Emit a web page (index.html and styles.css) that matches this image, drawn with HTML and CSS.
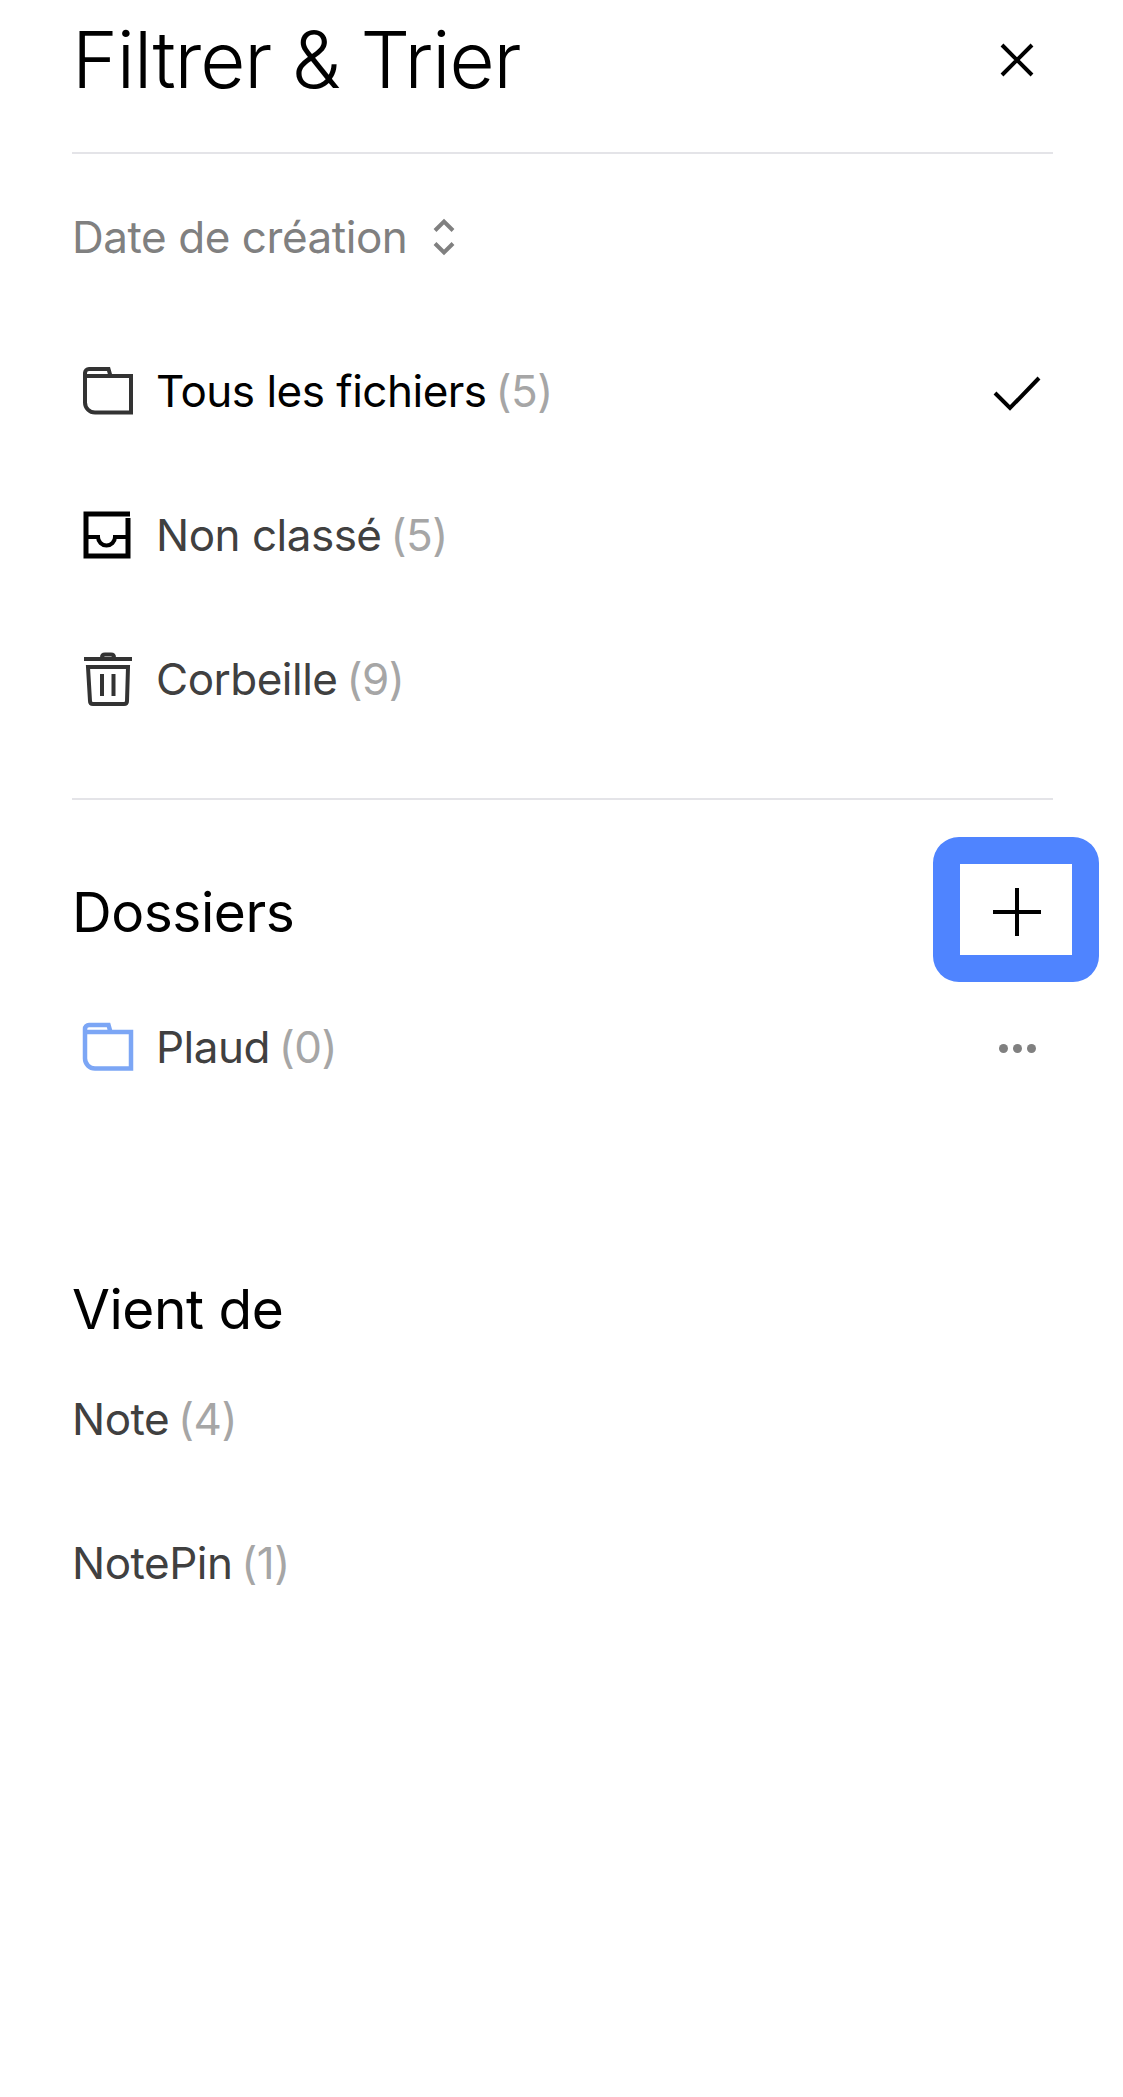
FILE: index.html
```html
<!DOCTYPE html>
<html lang="fr">
<head>
<meta charset="utf-8">
<title>Filtrer &amp; Trier</title>
<link rel="stylesheet" href="styles.css">
</head>
<body>
<main class="sheet">
  <header class="head">
    <h1 class="title">Filtrer &amp; Trier</h1>
    <span class="slot">
      <svg class="icon" viewBox="0 0 72 72"><path d="M21 21L51 51M51 21L21 51" class="stroke-black"/></svg>
    </span>
  </header>

  <div class="sort">
    <span>Date de création</span>
    <svg class="sort-icon" viewBox="0 0 24 40"><path d="M3 13.500L12 4.500L21 13.500M3 26.500L12 35.500L21 26.500" class="stroke-grey"/></svg>
  </div>

  <section class="filters">
    <div class="row">
      <svg class="icon" viewBox="0 0 72 72"><path d="M13 20V17a4 4 0 0 1 4-4H36.500L38.500 20H59V56.500H23a10 10 0 0 1-10-10V20H59" class="stroke-dark"/></svg>
      <span class="label label-active">Tous les fichiers <span class="count">(5)</span></span>
      <span class="slot">
        <svg class="icon" viewBox="0 0 72 72"><path d="M14 37L29 52L58 22" class="stroke-black"/></svg>
      </span>
    </div>
    <div class="row">
      <svg class="icon" viewBox="0 0 72 72"><path d="M58 14H14V56H56V18" class="stroke-heavy"/><path d="M14 37H26a8.500 8.500 0 0 0 17 0H56" class="stroke-black"/></svg>
      <span class="label">Non classé <span class="count">(5)</span></span>
    </div>
    <div class="row">
      <svg class="icon" viewBox="0 0 72 72"><path d="M12 15H60M30 13.500Q30 10.500 33 10.500H39Q42 10.500 42 13.500M16 23H56L55 57Q55 60 52 60H21Q18 60 18 57ZM30 30V52M41.500 30V52" class="stroke-dark"/></svg>
      <span class="label">Corbeille <span class="count">(9)</span></span>
    </div>
  </section>

  <section class="folders">
    <div class="section-head">
      <h2 class="heading">Dossiers</h2>
      <span class="add-frame">
        <svg class="add-icon" viewBox="0 0 48 48"><path d="M24 0V48M0 24H48" class="stroke-black"/></svg>
      </span>
    </div>
    <div class="row">
      <svg class="icon" viewBox="0 0 72 72"><path d="M13 20V17a4 4 0 0 1 4-4H36.500L38.500 20H59V56.500H23a10 10 0 0 1-10-10V20H59" class="stroke-blue"/></svg>
      <span class="label">Plaud <span class="count">(0)</span></span>
      <span class="slot dots"><i class="dot"></i><i class="dot"></i><i class="dot"></i></span>
    </div>
  </section>

  <section class="sources">
    <h2 class="heading">Vient de</h2>
    <div class="row"><span class="label">Note <span class="count">(4)</span></span></div>
    <div class="row"><span class="label">NotePin <span class="count">(1)</span></span></div>
  </section>
</main>
</body>
</html>
```

FILE: styles.css
```css
* { box-sizing: border-box; }

html, body {
  margin: 0;
  padding: 0;
  background: #fff;
}

body {
  font-family: Inter, "Liberation Sans", sans-serif;
  color: #000;
}

.sheet {
  width: 1123px;
  height: 2097px;
  padding: 0 70px 0 72px;
  overflow: hidden;
}

.head {
  display: flex;
  align-items: center;
  justify-content: space-between;
  height: 154px;
  padding-bottom: 32px;
  border-bottom: 2px solid #e4e4e8;
}

.title {
  margin: 0;
  font-size: 78px;
  font-weight: 300;
  line-height: 88px;
  letter-spacing: -1.1px;
}

.slot {
  display: flex;
  align-items: center;
  justify-content: center;
  width: 72px;
  height: 72px;
  margin-left: auto;
}

.icon {
  display: block;
  flex: none;
  width: 72px;
  height: 72px;
}

.stroke-black, .stroke-dark, .stroke-blue, .stroke-grey, .stroke-heavy {
  fill: none;
  stroke-width: 4;
}
.stroke-black { stroke: #000; }
.stroke-heavy { stroke: #000; stroke-width: 5; }
.stroke-dark { stroke: #333; }
.stroke-blue { stroke: #7ca6f5; stroke-width: 4.500; }
.stroke-grey { stroke: #808080; }

.sort {
  display: flex;
  align-items: center;
  gap: 25px;
  height: 166px;
  font-size: 44px;
  letter-spacing: -0.45px;
  color: #808080;
}

.sort-icon {
  display: block;
  width: 24px;
  height: 40px;
}

.filters {
  height: 480px;
  border-bottom: 2px solid #e4e4e8;
}

.row {
  display: flex;
  align-items: center;
  height: 144px;
}

.row .icon + .label {
  margin-left: 12px;
}

.label {
  padding-bottom: 2px;
  font-size: 44px;
  letter-spacing: -0.5px;
  color: #404040;
  white-space: nowrap;
}

.label-active { color: #000; }

.count {
  margin-left: -3px;
  color: #a6a6a6;
}

.folders {
  height: 320px;
  padding-top: 37px;
}

.section-head {
  display: flex;
  align-items: center;
  justify-content: space-between;
  height: 145px;
  margin-right: -46px;
  margin-bottom: -6px;
}

.heading {
  margin: 0;
  padding-top: 5px;
  font-size: 55px;
  font-weight: 400;
  line-height: 66px;
  letter-spacing: -0.45px;
}

.add-frame {
  display: flex;
  align-items: center;
  justify-content: center;
  width: 166px;
  height: 145px;
  padding: 4px 2px 0 4px;
  border: 27px solid #4f84ff;
  border-radius: 26px;
  background: #fff;
}

.add-icon {
  display: block;
  width: 48px;
  height: 48px;
}

.dots { gap: 5px; }

.dot {
  display: block;
  width: 9px;
  height: 9px;
  border-radius: 50%;
  background: #808080;
}

.sources {
  padding-top: 151px;
}

.sources .heading {
  margin-bottom: 6px;
}
```
